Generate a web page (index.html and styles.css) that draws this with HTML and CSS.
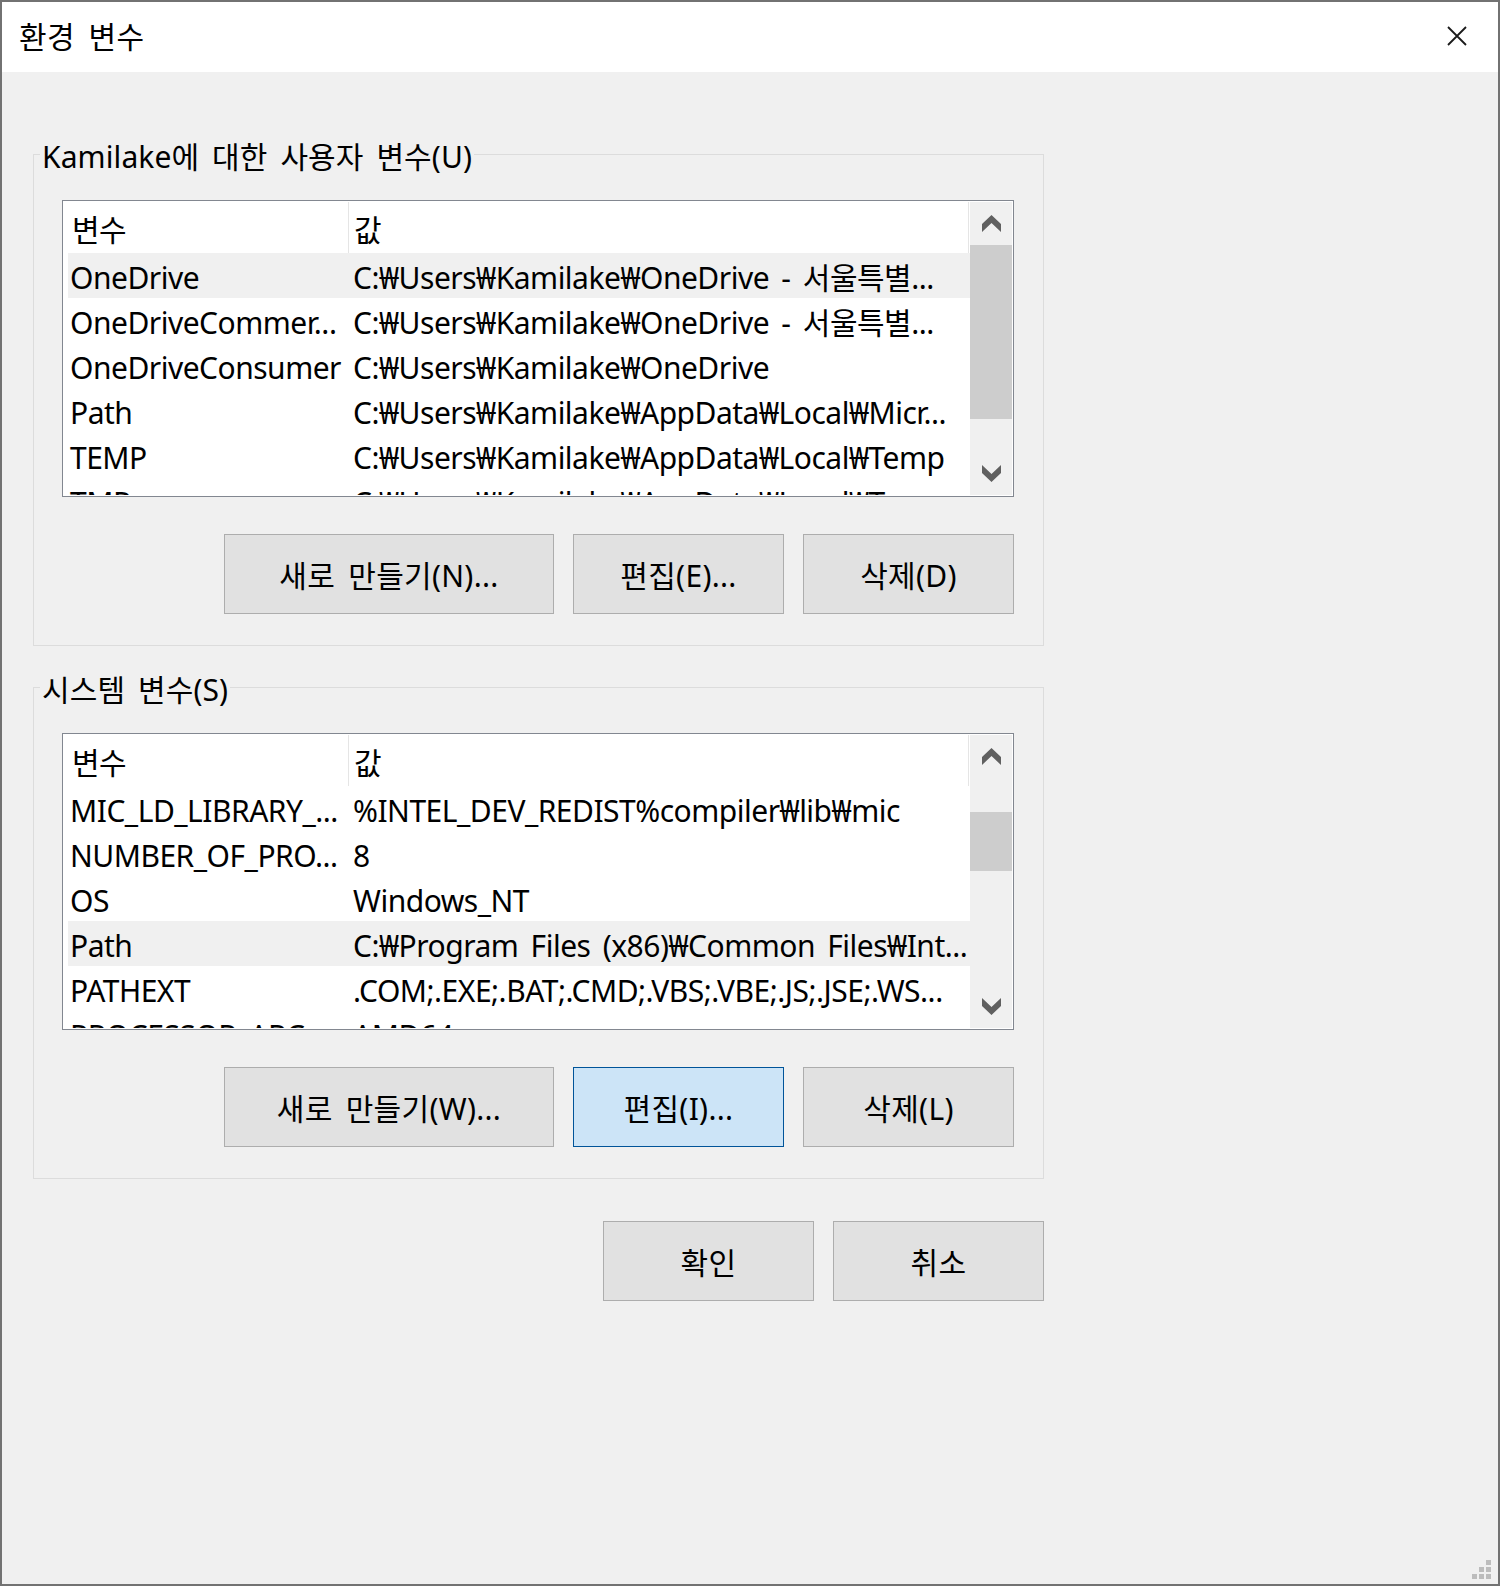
FILE: index.html
```html
<!DOCTYPE html>
<html lang="ko">
  <head>
    <meta charset="UTF-8">
    <meta name="viewport" content="width=device-width, initial-scale=1.0">
    <title>환경 변수</title>
    <link rel="stylesheet" href="styles.css">
  </head>
  <body>
    <div class="window">
      <div class="titlebar">
        <span class="title">환경 변수</span>
        <svg class="close-icon" width="20" height="20" viewBox="0 0 20 20">
          <path d="M1 1 L19 19 M19 1 L1 19" stroke="#1a1a1a" stroke-width="1.8" fill="none"/>
        </svg>
      </div>

      <div class="content">
        <!-- user variables -->
        <fieldset class="group">
          <legend class="group-label">Kamilake에 대한 사용자 변수(U)</legend>
          <div class="group-body">
            <div class="listview">
              <div class="list-main">
                <div class="list-header">
                  <div class="hcol hcol-name">변수</div>
                  <div class="hcol hcol-value">값</div>
                </div>
                <div class="row selected"><span class="cell cell-name">OneDrive</span><span class="cell cell-value">C:₩Users₩Kamilake₩OneDrive - 서울특별...</span></div>
                <div class="row"><span class="cell cell-name">OneDriveCommer...</span><span class="cell cell-value">C:₩Users₩Kamilake₩OneDrive - 서울특별...</span></div>
                <div class="row"><span class="cell cell-name">OneDriveConsumer</span><span class="cell cell-value">C:₩Users₩Kamilake₩OneDrive</span></div>
                <div class="row"><span class="cell cell-name">Path</span><span class="cell cell-value">C:₩Users₩Kamilake₩AppData₩Local₩Micr...</span></div>
                <div class="row"><span class="cell cell-name">TEMP</span><span class="cell cell-value">C:₩Users₩Kamilake₩AppData₩Local₩Temp</span></div>
                <div class="row"><span class="cell cell-name">TMP</span><span class="cell cell-value">C:₩Users₩Kamilake₩AppData₩Local₩Temp</span></div>
              </div>
              <div class="scrollbar">
                <div class="scroll-btn">
                  <svg width="19" height="17" viewBox="0 0 19 17"><polygon points="0,9 9.5,0 19,9 19,17 9.5,8 0,17" fill="#606060"/></svg>
                </div>
                <div class="scroll-track">
                  <div class="scroll-thumb" style="margin-top: 0px; height: 174px;"></div>
                </div>
                <div class="scroll-btn">
                  <svg width="19" height="17" viewBox="0 0 19 17"><polygon points="0,0 9.5,9 19,0 19,8 9.5,17 0,8" fill="#606060"/></svg>
                </div>
              </div>
            </div>
            <div class="buttons">
              <button class="btn btn-wide">새로 만들기(N)...</button>
              <button class="btn">편집(E)...</button>
              <button class="btn">삭제(D)</button>
            </div>
          </div>
        </fieldset>

        <!-- system variables -->
        <fieldset class="group group-system">
          <legend class="group-label">시스템 변수(S)</legend>
          <div class="group-body">
            <div class="listview">
              <div class="list-main">
                <div class="list-header">
                  <div class="hcol hcol-name">변수</div>
                  <div class="hcol hcol-value">값</div>
                </div>
                <div class="row"><span class="cell cell-name">MIC_LD_LIBRARY_...</span><span class="cell cell-value">%INTEL_DEV_REDIST%compiler₩lib₩mic</span></div>
                <div class="row"><span class="cell cell-name">NUMBER_OF_PRO...</span><span class="cell cell-value">8</span></div>
                <div class="row"><span class="cell cell-name">OS</span><span class="cell cell-value">Windows_NT</span></div>
                <div class="row selected"><span class="cell cell-name">Path</span><span class="cell cell-value">C:₩Program Files (x86)₩Common Files₩Int...</span></div>
                <div class="row"><span class="cell cell-name">PATHEXT</span><span class="cell cell-value">.COM;.EXE;.BAT;.CMD;.VBS;.VBE;.JS;.JSE;.WS...</span></div>
                <div class="row"><span class="cell cell-name">PROCESSOR_ARC...</span><span class="cell cell-value">AMD64</span></div>
              </div>
              <div class="scrollbar">
                <div class="scroll-btn">
                  <svg width="19" height="17" viewBox="0 0 19 17"><polygon points="0,9 9.5,0 19,9 19,17 9.5,8 0,17" fill="#606060"/></svg>
                </div>
                <div class="scroll-track">
                  <div class="scroll-thumb" style="margin-top: 34px; height: 59px;"></div>
                </div>
                <div class="scroll-btn">
                  <svg width="19" height="17" viewBox="0 0 19 17"><polygon points="0,0 9.5,9 19,0 19,8 9.5,17 0,8" fill="#606060"/></svg>
                </div>
              </div>
            </div>
            <div class="buttons">
              <button class="btn btn-wide">새로 만들기(W)...</button>
              <button class="btn btn-focus">편집(I)...</button>
              <button class="btn">삭제(L)</button>
            </div>
          </div>
        </fieldset>

        <div class="dialog-buttons">
          <button class="btn">확인</button>
          <button class="btn">취소</button>
        </div>
      </div>

      <svg class="grip" width="19" height="19" viewBox="0 0 19 19">
        <rect x="14" y="0" width="5" height="5" fill="#bcbcbc"/>
        <rect x="7" y="7" width="5" height="5" fill="#bcbcbc"/>
        <rect x="14" y="7" width="5" height="5" fill="#bcbcbc"/>
        <rect x="0" y="14" width="5" height="5" fill="#bcbcbc"/>
        <rect x="7" y="14" width="5" height="5" fill="#bcbcbc"/>
        <rect x="14" y="14" width="5" height="5" fill="#bcbcbc"/>
      </svg>
    </div>
  </body>
</html>
```

FILE: styles.css
```css
body {
    margin: 0;
    font-family: "Noto Sans", "Noto Sans CJK KR", sans-serif;
    font-size: 30px;
    letter-spacing: -0.5px;
    word-spacing: 5px;
    color: #000;
}

.window {
    position: relative;
    box-sizing: border-box;
    width: 1500px;
    height: 1586px;
    border: 2px solid #727272;
    background-color: #f0f0f0;
}

.titlebar {
    height: 70px;
    background-color: white;
    display: flex;
    align-items: center;
    justify-content: space-between;
    padding: 0 31px 0 17px;
}

.title {
    line-height: 40px;
    letter-spacing: 0.5px;
}

.close-icon {
    display: block;
    margin-top: -2px;
}

.content {
    padding: 62px 0 0 31px;
}

.group {
    width: 1011px;
    box-sizing: border-box;
    margin: 0;
    padding: 0;
    border: 1px solid #dcdcdc;
    min-width: 0;
}

.group-system {
    margin-top: 21px;
}

.group-label {
    margin-left: 6px;
    padding: 4px 2px 0 2px;
    line-height: 37px;
    letter-spacing: 0.1px;
}

.group-body {
    padding: 25px 29px 31px 28px;
}

.listview {
    height: 297px;
    box-sizing: border-box;
    border: 1px solid #828790;
    padding: 1px;
    background-color: white;
    display: flex;
}

.list-main {
    flex: 1;
    overflow: hidden;
}

.list-header {
    height: 51px;
    display: flex;
}

.hcol {
    box-sizing: border-box;
    border-right: 1px solid #e5e5e5;
    padding-top: 4px;
    line-height: 47px;
    white-space: nowrap;
}

.hcol-name {
    width: 285px;
    padding-left: 8px;
}

.hcol-value {
    width: 620px;
    padding-left: 5px;
}

.row {
    height: 45px;
    box-sizing: border-box;
    margin-left: 4px;
    padding-top: 4px;
    display: flex;
    line-height: 41px;
    white-space: nowrap;
}

.row.selected {
    background-color: #f0f0f0;
}

.cell {
    overflow: hidden;
}

.cell-name {
    width: 280px;
    flex-shrink: 0;
    padding-left: 2px;
    box-sizing: border-box;
}

.cell-value {
    flex: 1;
    padding-left: 5px;
}

.scrollbar {
    width: 42px;
    background-color: #f0f0f0;
    display: flex;
    flex-direction: column;
}

.scroll-btn {
    height: 43px;
    display: flex;
    align-items: center;
    justify-content: center;
}

.scroll-btn svg {
    display: block;
}

.scroll-track {
    flex: 1;
}

.scroll-thumb {
    background-color: #cdcdcd;
}

.buttons {
    margin-top: 37px;
    display: flex;
    justify-content: flex-end;
    gap: 19px;
}

.btn {
    width: 211px;
    height: 80px;
    box-sizing: border-box;
    background-color: #e1e1e1;
    border: 1px solid #adadad;
    font-family: inherit;
    font-size: 30px;
    letter-spacing: 0.3px;
    word-spacing: inherit;
    color: #000;
    padding: 0;
}

.btn-wide {
    width: 330px;
}

.btn-focus {
    background-color: #cce4f7;
    border-color: #005499;
}

.dialog-buttons {
    width: 1011px;
    margin-top: 42px;
    display: flex;
    justify-content: flex-end;
    gap: 19px;
}

.grip {
    position: absolute;
    right: 7px;
    bottom: 5px;
}
```
